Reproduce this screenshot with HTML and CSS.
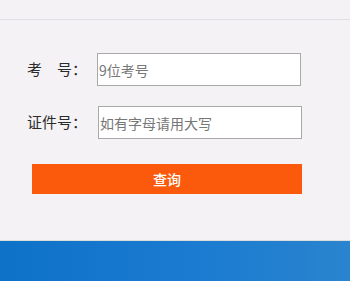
FILE: index.html
```html
<!DOCTYPE html>
<html lang="zh-CN">

<head>
  <meta charset="UTF-8">
  <meta name="viewport" content="width=device-width, initial-scale=1.0">
  <title>成绩查询</title>
  <link rel="stylesheet" href="styles.css">
</head>

<body>
  <div class="top-bar"></div>

  <form class="query-form">
    <div class="row">
      <label class="label" for="kh">考　号：</label>
      <input class="field" id="kh" type="text" placeholder="9位考号">
    </div>
    <div class="row row-second">
      <label class="label" for="zjh">证件号：</label>
      <input class="field field-second" id="zjh" type="text" placeholder="如有字母请用大写">
    </div>
    <button class="btn-query" type="button">查询</button>
  </form>

  <div class="footer-band"></div>
</body>

</html>
```

FILE: styles.css
```css
* {
  margin: 0;
  padding: 0;
  box-sizing: border-box;
}

body {
  width: 350px;
  height: 281px;
  overflow: hidden;
  background-color: #f4f2f5;
  font-family: "Noto Sans CJK SC", "Liberation Sans", sans-serif;
  color: #333;
}

.top-bar {
  height: 20px;
  border-bottom: 1px solid #e1dfe3;
}

.query-form {
  height: 220px;
  padding: 33px 0 0 27px;
}

.row {
  display: flex;
  align-items: center;
}

.row-second {
  margin-top: 20px;
}

.label {
  width: 70px;
  margin-top: -2px;
  font-size: 15px;
  line-height: 20px;
  color: #2b2b2b;
  white-space: nowrap;
}

.field {
  width: 204px;
  height: 33px;
  border: 1px solid #a9a9a9;
  background-color: #fff;
  padding: 0 1px;
  font-family: inherit;
  font-size: 14px;
  color: #333;
  outline: none;
}

.field::placeholder {
  color: #777;
}

.field-second {
  margin-left: 1px;
}

.btn-query {
  display: block;
  width: 270px;
  height: 30px;
  margin: 25px 0 0 5px;
  border: none;
  background-color: #fb5a0c;
  color: #fff;
  font-family: inherit;
  font-size: 14px;
  font-weight: 500;
  cursor: pointer;
}

.footer-band {
  height: 41px;
  border-top: 1px solid #dcdcdc;
  background: linear-gradient(90deg, #0e72c9 0%, #1a7bd0 55%, #2a84cf 100%);
}
```
